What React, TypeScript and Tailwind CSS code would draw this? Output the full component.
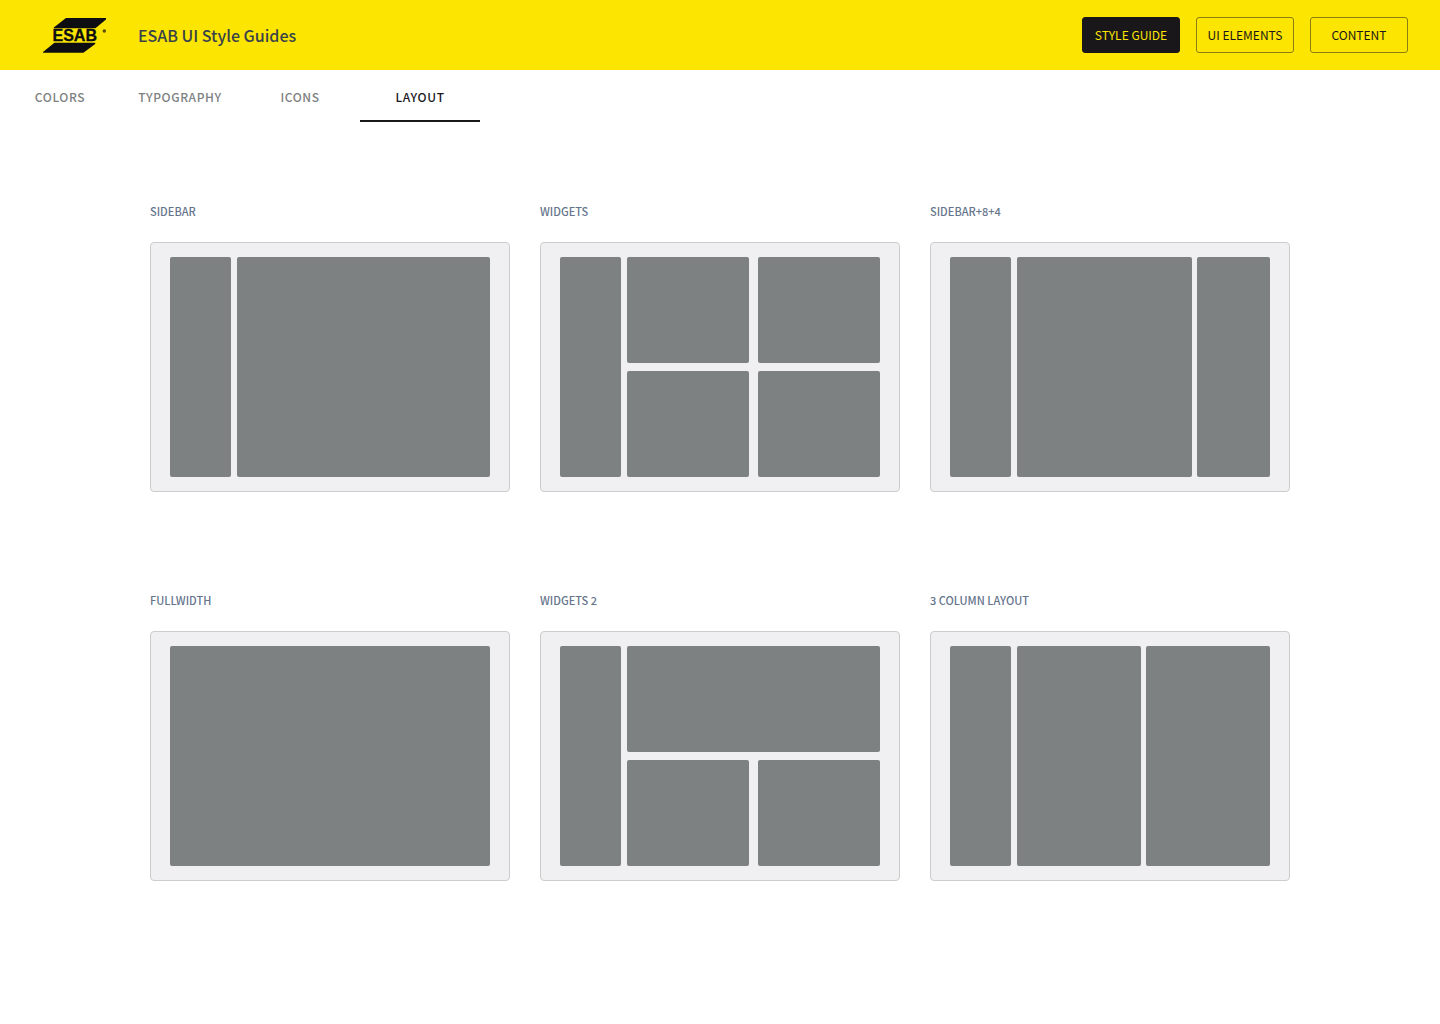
import React from 'react';
import clsx from 'clsx';

const sections = [
  { label: 'STYLE GUIDE', active: true },
  { label: 'UI ELEMENTS', active: false },
  { label: 'CONTENT', active: false },
];

const tabs = [
  { label: 'COLORS', href: '#colors' },
  { label: 'TYPOGRAPHY', href: '#typography' },
  { label: 'ICONS', href: '#icons' },
  { label: 'LAYOUT', href: '#layout', active: true },
];

const Logo: React.FC = () => (
  <svg width="66" height="38" viewBox="0 0 66 38" role="img" aria-label="ESAB" className="shrink-0">
    <g fill="#0d0d12">
      <path d="M24 2H64V3.4L53.4 12.3H11.8V11.4Z" />
      <path d="M12.4 26.7H53.2V28L41.4 36.8H1V36Z" />
      <text
        x="10.5"
        y="25.2"
        fontSize="16"
        fontWeight="700"
        stroke="#0d0d12"
        strokeWidth="0.3"
        fontFamily="'Liberation Sans', sans-serif"
      >
        ESAB
      </text>
      <circle cx="62.3" cy="15" r="1.7" opacity="0.7" />
    </g>
  </svg>
);

const Block: React.FC<{ className?: string }> = ({ className }) => (
  <div className={clsx('rounded-xs bg-[#7d8182]', className)} />
);

const Sidebar: React.FC = () => <Block className="w-[61px] shrink-0" />;

const layouts = [
  {
    name: 'SIDEBAR',
    preview: (
      <>
        <Sidebar />
        <Block className="flex-1" />
      </>
    ),
  },
  {
    name: 'WIDGETS',
    preview: (
      <>
        <Sidebar />
        <div className="grid flex-1 grid-cols-2 grid-rows-2 gap-x-[9px] gap-y-2">
          <Block />
          <Block />
          <Block />
          <Block />
        </div>
      </>
    ),
  },
  {
    name: 'SIDEBAR+8+4',
    preview: (
      <>
        <Sidebar />
        <div className="flex flex-1 gap-[5px]">
          <Block className="flex-1" />
          <Block className="w-[73px]" />
        </div>
      </>
    ),
  },
  {
    name: 'FULLWIDTH',
    preview: <Block className="flex-1" />,
  },
  {
    name: 'WIDGETS 2',
    preview: (
      <>
        <Sidebar />
        <div className="grid flex-1 grid-cols-2 grid-rows-2 gap-x-[9px] gap-y-2">
          <Block className="col-span-2" />
          <Block />
          <Block />
        </div>
      </>
    ),
  },
  {
    name: '3 COLUMN LAYOUT',
    preview: (
      <>
        <Sidebar />
        <div className="flex flex-1 gap-[5px]">
          <Block className="flex-1" />
          <Block className="flex-1" />
        </div>
      </>
    ),
  },
];

const App: React.FC = () => {
  return (
    <div className="min-h-screen bg-white font-['Noto_Sans_CJK_SC','Noto_Sans',sans-serif]">
      <header className="flex items-center justify-between bg-[#fce500] py-4 pr-8 pl-[42px]">
        <div className="flex items-center gap-[30px]">
          <Logo />
          <h1 className="text-base leading-[22px] font-medium text-[#39424a]">ESAB UI Style Guides</h1>
        </div>
        <div className="flex gap-4 py-px">
          {sections.map((section) => (
            <button
              key={section.label}
              type="button"
              className={clsx(
                'h-9 w-[98px] rounded-[3px] border text-xs whitespace-nowrap',
                section.active
                  ? 'border-[#1a171b] bg-[#1a171b] text-[#fce500]'
                  : 'border-[#8b7e0e] text-[#1a171b]'
              )}
            >
              {section.label}
            </button>
          ))}
        </div>
      </header>

      <nav className="flex">
        {tabs.map((tab) => (
          <a
            key={tab.label}
            href={tab.href}
            aria-current={tab.active ? 'page' : undefined}
            className={clsx(
              'w-[120px] border-b-2 pt-[18px] pb-[14px] text-center text-xs leading-[18px] font-medium tracking-wider',
              tab.active ? 'border-[#1a171b] text-[#1a171b]' : 'border-transparent text-[#7d8182]'
            )}
          >
            {tab.label}
          </a>
        ))}
      </nav>

      <main className="mx-auto grid max-w-[1140px] grid-cols-1 gap-x-[30px] gap-y-[100px] py-[81px] md:grid-cols-2 lg:grid-cols-3">
        {layouts.map((layout) => (
          <section key={layout.name}>
            <h2 className="mb-[23px] text-[11px] leading-4 font-medium text-[#66758c]">{layout.name}</h2>
            <div className="flex h-[250px] gap-1.5 rounded border border-[#cccccc] bg-[#f0f0f3] px-[19px] py-[14px]">
              {layout.preview}
            </div>
          </section>
        ))}
      </main>
    </div>
  );
};

export default App;
